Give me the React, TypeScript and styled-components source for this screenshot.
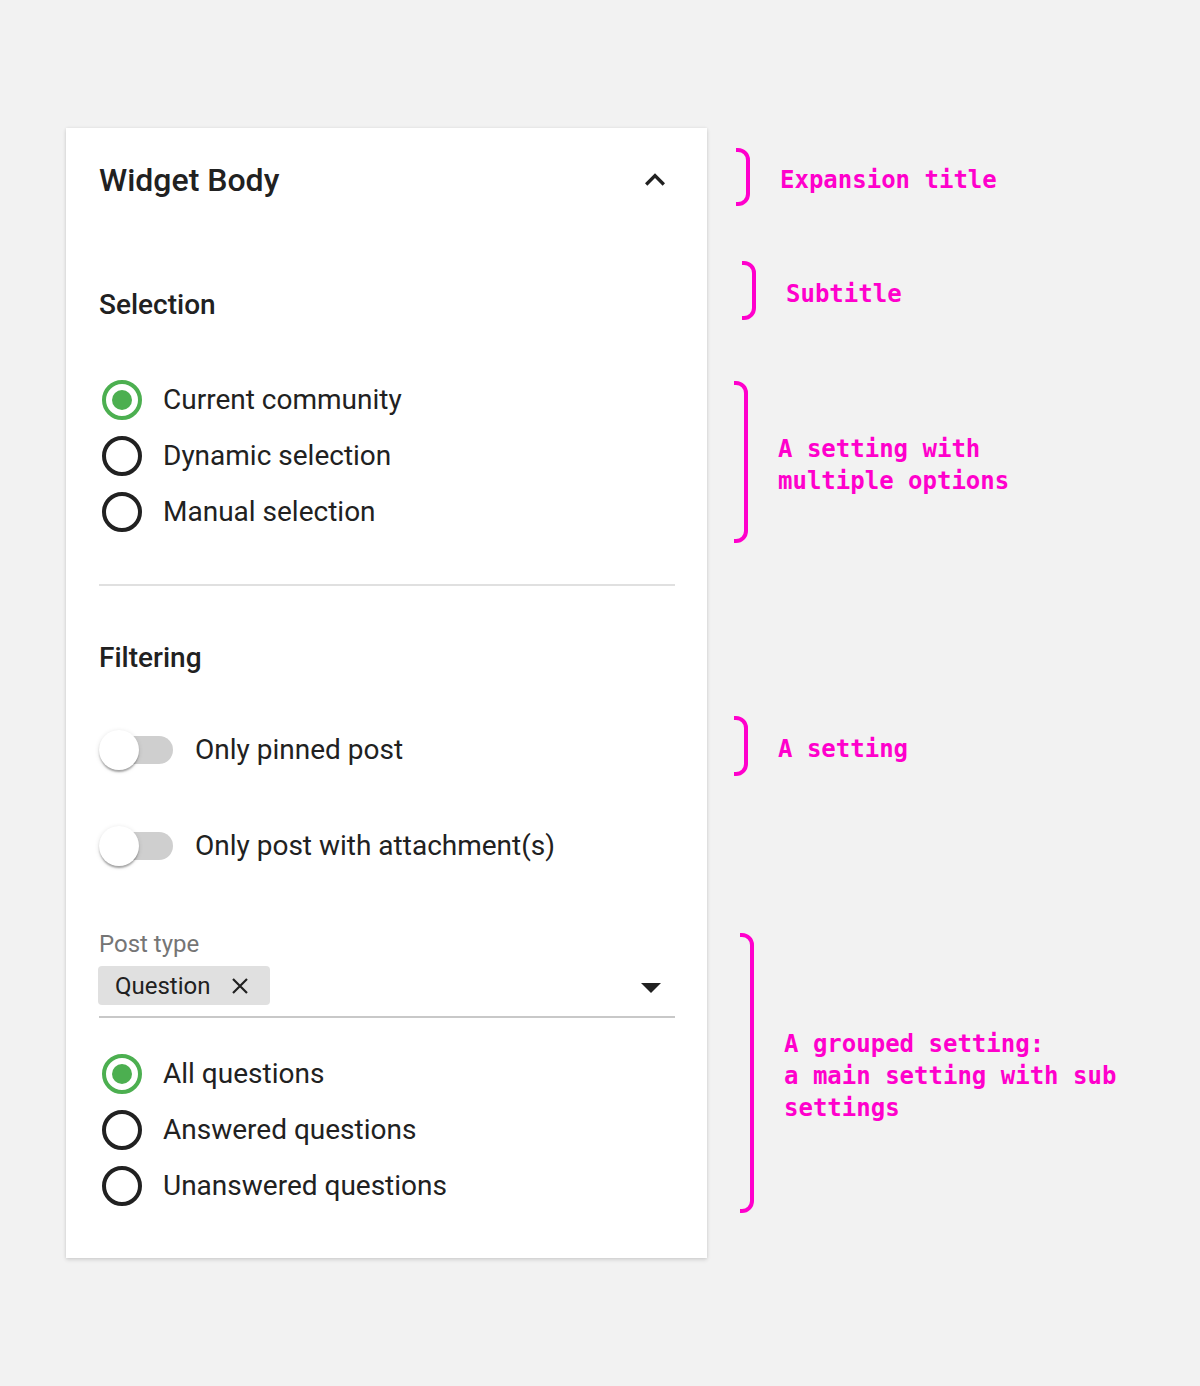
import React from "react";
import styled, { createGlobalStyle } from "styled-components";

const GlobalStyle = createGlobalStyle`
  html, body {
    margin: 0;
    padding: 0;
    background: #f2f2f2;
  }
  body {
    font-family: Roboto, "Noto Sans", Arial, sans-serif;
    color: #212121;
    -webkit-font-smoothing: antialiased;
  }
`;

const Page = styled.div`
  display: flex;
  align-items: flex-start;
  box-sizing: border-box;
  min-height: 1386px;
  padding: 128px 0 0 66px;
`;

const Card = styled.section`
  width: 641px;
  box-sizing: border-box;
  background: #ffffff;
  padding: 0 32px 44px 33px;
  box-shadow: 0 2px 4px rgba(0, 0, 0, 0.12), 0 0 3px rgba(0, 0, 0, 0.08);
  display: flex;
  flex-direction: column;
`;

const Header = styled.header`
  height: 104px;
  display: flex;
  align-items: center;
  justify-content: space-between;
`;

const Title = styled.h1`
  margin: 0;
  font-size: 32px;
  font-weight: 500;
  line-height: 40px;
  color: #212121;
`;

const IconButton = styled.button`
  width: 40px;
  height: 40px;
  padding: 0;
  border: 0;
  background: transparent;
  display: grid;
  place-items: center;
  color: #212121;
`;

const Subtitle = styled.h2<{ $top: number }>`
  margin: ${(p) => p.$top}px 0 0;
  font-size: 28px;
  font-weight: 500;
  line-height: 40px;
  color: #212121;
`;

const RadioList = styled.div<{ $top: number }>`
  margin-top: ${(p) => p.$top}px;
  display: flex;
  flex-direction: column;
`;

const OptionRow = styled.label`
  height: 56px;
  display: flex;
  align-items: center;
  gap: 21px;
  font-size: 28px;
  line-height: 40px;
  color: #212121;
`;

const RadioMark = styled.span<{ $checked?: boolean }>`
  margin-left: 3px;
  width: 40px;
  height: 40px;
  box-sizing: border-box;
  border-radius: 50%;
  border: 4px solid ${(p) => (p.$checked ? "#4caf50" : "#212121")};
  display: grid;
  place-items: center;
  flex: none;
`;

const RadioDot = styled.span`
  width: 20px;
  height: 20px;
  border-radius: 50%;
  background: #4caf50;
`;

const Divider = styled.hr`
  margin: 44px 0 0;
  border: 0;
  height: 2px;
  background: #e0e0e0;
`;

const ToggleList = styled.div<{ $top: number }>`
  margin-top: ${(p) => p.$top}px;
  display: flex;
  flex-direction: column;
  gap: 40px;
`;

const ToggleRow = styled.label`
  height: 56px;
  display: flex;
  align-items: center;
  gap: 22px;
  font-size: 28px;
  line-height: 40px;
  color: #212121;
`;

const Switch = styled.span`
  position: relative;
  width: 74px;
  height: 40px;
  flex: none;
  display: flex;
  align-items: center;
  justify-content: flex-end;
`;

const Track = styled.span`
  width: 68px;
  height: 28px;
  border-radius: 14px;
  background: #cfcfcf;
`;

const Thumb = styled.span`
  position: absolute;
  left: 0;
  top: 0;
  width: 40px;
  height: 40px;
  border-radius: 50%;
  background: #ffffff;
  box-shadow: 0 3px 2px -1px rgba(0, 0, 0, 0.2), 0 2px 2px rgba(0, 0, 0, 0.14),
    0 1px 5px rgba(0, 0, 0, 0.12);
`;

const Field = styled.div<{ $top: number }>`
  margin-top: ${(p) => p.$top}px;
  display: flex;
  flex-direction: column;
`;

const FieldLabel = styled.span`
  font-size: 24px;
  line-height: 28px;
  color: #757575;
`;

const SelectBox = styled.div`
  height: 39px;
  padding: 8px 0 11px;
  border-bottom: 2px solid #c8c8c8;
  display: flex;
  align-items: center;
  justify-content: space-between;
`;

const Chip = styled.span`
  margin-left: -1px;
  height: 39px;
  box-sizing: border-box;
  padding: 0 21px 0 17px;
  border-radius: 4px;
  background: #e0e0e0;
  display: flex;
  align-items: center;
  gap: 21px;
  font-size: 24px;
  color: #212121;
`;

const DropIcon = styled.span`
  width: 48px;
  height: 39px;
  display: flex;
  align-items: center;
  justify-content: center;
  overflow: visible;
  & > svg {
    flex: none;
    margin-top: 2px;
  }
`;

const Notes = styled.aside`
  display: flex;
  flex-direction: column;
`;

const Note = styled.div<{ $top: number; $indent: number }>`
  margin-top: ${(p) => p.$top}px;
  margin-left: ${(p) => p.$indent}px;
  display: flex;
  align-items: center;
  gap: 30px;
`;

const NoteText = styled.p`
  margin: 0;
  padding-top: 6px;
  font-family: "DejaVu Sans Mono", "Liberation Mono", monospace;
  font-size: 24px;
  font-weight: 700;
  line-height: 32px;
  color: #ff00cc;
  white-space: pre;
`;

const Bracket = ({ h }: { h: number }) => (
  <svg width="14" height={h} viewBox={`0 0 14 ${h}`} style={{ flex: "none", display: "block" }}>
    <path
      d={`M0 2 H2 A10 10 0 0 1 12 12 V${h - 12} A10 10 0 0 1 2 ${h - 2} H0`}
      fill="none"
      stroke="#ff00cc"
      strokeWidth="4"
    />
  </svg>
);

const ChevronUp = () => (
  <svg width="40" height="40" viewBox="0 0 24 24" fill="#212121">
    <path d="M12 8l-6 6 1.41 1.41L12 10.83l4.59 4.58L18 14z" />
  </svg>
);

const ArrowDrop = () => (
  <svg width="48" height="48" viewBox="0 0 24 24" fill="#212121">
    <path d="M7 10l5 5 5-5z" />
  </svg>
);

const CloseIcon = () => (
  <svg width="18" height="18" viewBox="0 0 18 18">
    <path d="M2 2 L16 16 M16 2 L2 16" stroke="#212121" strokeWidth="2.2" fill="none" />
  </svg>
);

type Opt = { label: string; checked?: boolean };

const RadioGroup = ({ options, top }: { options: Opt[]; top: number }) => (
  <RadioList $top={top}>
    {options.map((o) => (
      <OptionRow key={o.label}>
        <RadioMark $checked={o.checked}>{o.checked && <RadioDot />}</RadioMark>
        {o.label}
      </OptionRow>
    ))}
  </RadioList>
);

export default function App() {
  return (
    <>
      <GlobalStyle />
      <Page>
        <Card>
          <Header>
            <Title>Widget Body</Title>
            <IconButton aria-label="collapse">
              <ChevronUp />
            </IconButton>
          </Header>

          <Subtitle $top={53}>Selection</Subtitle>
          <RadioGroup
            top={47}
            options={[
              { label: "Current community", checked: true },
              { label: "Dynamic selection" },
              { label: "Manual selection" },
            ]}
          />
          <Divider />

          <Subtitle $top={52}>Filtering</Subtitle>
          <ToggleList $top={44}>
            <ToggleRow>
              <Switch>
                <Track />
                <Thumb />
              </Switch>
              Only pinned post
            </ToggleRow>
            <ToggleRow>
              <Switch>
                <Track />
                <Thumb />
              </Switch>
              Only post with attachment(s)
            </ToggleRow>
          </ToggleList>

          <Field $top={56}>
            <FieldLabel>Post type</FieldLabel>
            <SelectBox>
              <Chip>
                Question
                <CloseIcon />
              </Chip>
              <DropIcon>
                <ArrowDrop />
              </DropIcon>
            </SelectBox>
          </Field>

          <RadioGroup
            top={28}
            options={[
              { label: "All questions", checked: true },
              { label: "Answered questions" },
              { label: "Unanswered questions" },
            ]}
          />
        </Card>

        <Notes>
          <Note $top={20} $indent={29}>
            <Bracket h={58} />
            <NoteText>Expansion title</NoteText>
          </Note>
          <Note $top={55} $indent={35}>
            <Bracket h={59} />
            <NoteText>Subtitle</NoteText>
          </Note>
          <Note $top={61} $indent={27}>
            <Bracket h={162} />
            <NoteText>{"A setting with\nmultiple options"}</NoteText>
          </Note>
          <Note $top={173} $indent={27}>
            <Bracket h={60} />
            <NoteText>A setting</NoteText>
          </Note>
          <Note $top={157} $indent={33}>
            <Bracket h={280} />
            <NoteText>{"A grouped setting:\na main setting with sub\nsettings"}</NoteText>
          </Note>
        </Notes>
      </Page>
    </>
  );
}
